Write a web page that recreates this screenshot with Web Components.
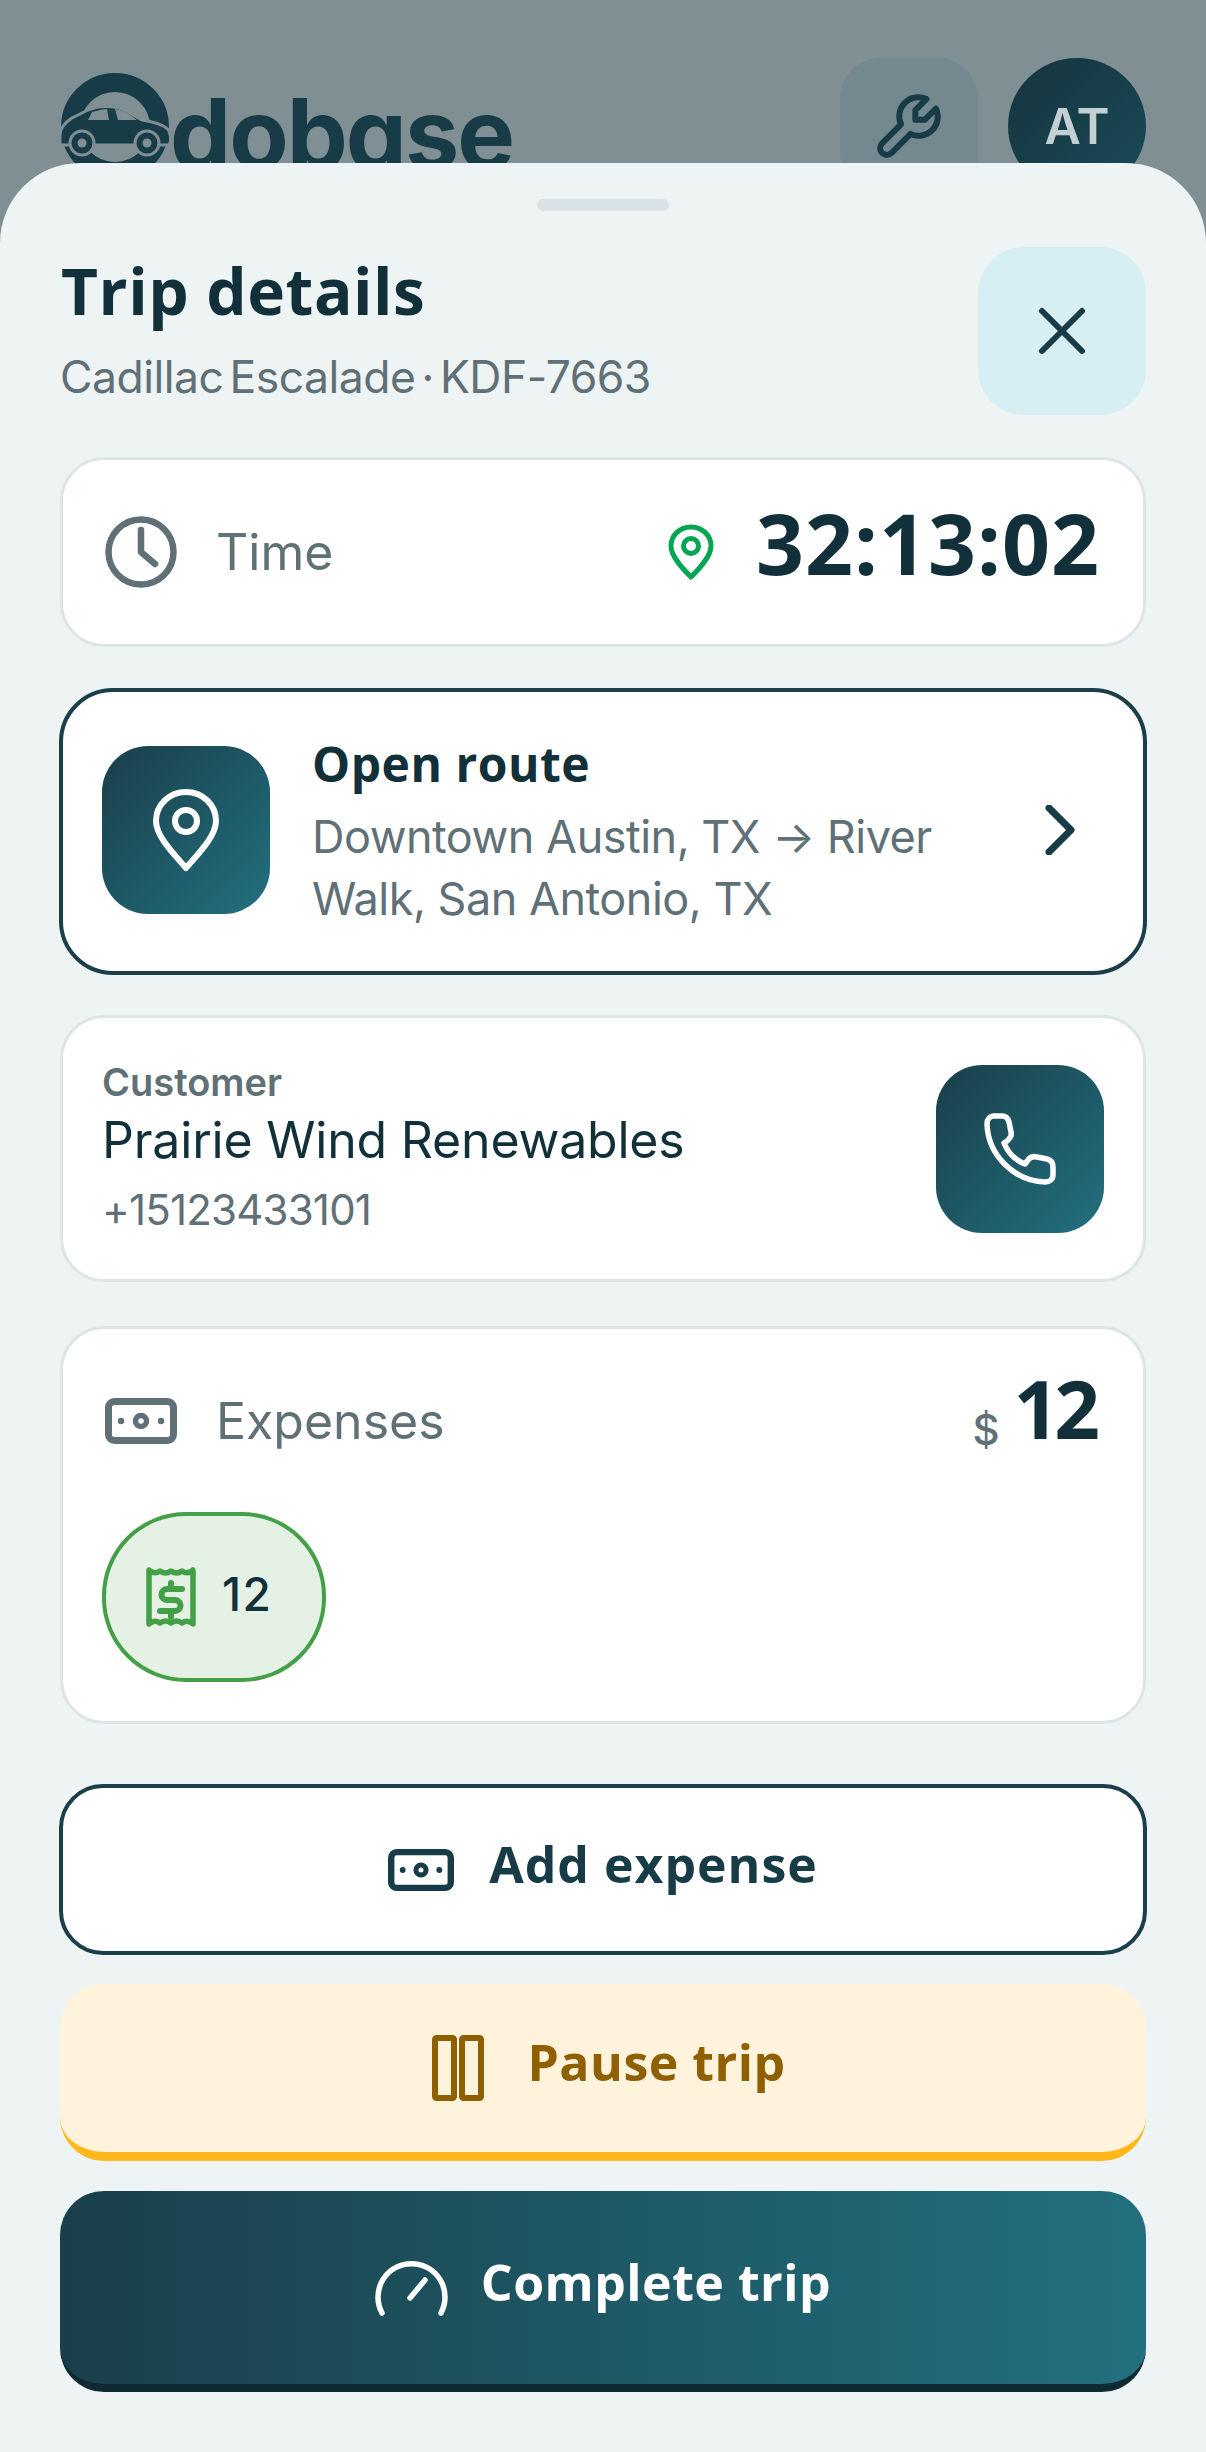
<!DOCTYPE html>
<html>
<head>
<meta charset="utf-8">
<style>
  html, body { margin: 0; padding: 0; }
  body { width: 1206px; height: 2452px; overflow: hidden; background: #808f94; font-family: Inter, "Liberation Sans", sans-serif; }
</style>
</head>
<body>
<trip-page>
  <top-bar slot="top"></top-bar>
  <bottom-sheet>
    <sheet-title></sheet-title>
    <time-card></time-card>
    <route-card></route-card>
    <customer-card></customer-card>
    <expenses-card></expenses-card>
    <action-button kind="outline" icon="money" w="66" h="44" gap="35">Add expense</action-button>
    <action-button kind="pause" icon="pause" w="52" h="66" gap="43">Pause trip</action-button>
    <action-button kind="primary" icon="gauge" w="73" h="56" gap="33">Complete trip</action-button>
  </bottom-sheet>
</trip-page>

<script>
const ICONS = {
  x: ['0 0 48 48', '<path d="M4 4 44 44M44 4 4 44" stroke-width="6"/>'],
  clock: ['0 0 72 72', '<circle cx="36" cy="36" r="32.5" stroke-width="6.5"/><path d="M36 14V36L50 48" stroke-width="6.5"/>'],
  pin: ['0 0 46 56', '<path d="M23 3C12 3 3 11 3 22C3 33 16 46 23 53C30 46 43 33 43 22C43 11 34 3 23 3Z" stroke-width="5"/><circle cx="23" cy="22" r="7.5" stroke-width="5"/>'],
  pinw: ['0 0 68 84', '<path d="M34 4C17 4 4 17 4 33C4 49 24 68 34 80C44 68 64 49 64 33C64 17 51 4 34 4Z" stroke-width="6"/><circle cx="34" cy="33" r="11" stroke-width="6"/>'],
  chevron: ['0 0 30 50', '<path d="M4 3 26 25 4 47" stroke-width="7"/>'],
  phone: ['0 0 72 72', '<path d="M10 3H18C22 3 24 5 25 9L27 19C28 23 26 25 23 28L20 30C24 40 31 47 41 51L44 47C46 44 49 43 53 44L63 46C67 47 69 50 69 54V62C69 66 66 69 61 69C30 68 4 42 3 11C3 6 6 3 10 3Z" stroke-width="5.5"/>'],
  money: ['0 0 72 46', '<rect x="3.500" y="3.500" width="65" height="39" rx="6" stroke-width="7"/><circle cx="36" cy="23" r="5.500" stroke-width="5.500"/><circle cx="16" cy="23" r="3.200" fill="currentColor" stroke="none"/><circle cx="56" cy="23" r="3.200" fill="currentColor" stroke="none"/>'],
  receipt: ['0 0 50 60', '<path d="M3 3Q8.500 8 14 4Q19.500 8 25 4Q30.500 8 36 4Q41.500 8 47 3V57Q41.500 52 36 56Q30.500 52 25 56Q19.500 52 14 56Q8.500 52 3 57Z" stroke-width="5.500"/><path d="M36 22H21A5.500 5.500 0 0 0 21 33H29A5.500 5.500 0 0 1 29 44H14M25 16V22M25 44V50" stroke-width="6"/>'],
  pause: ['0 0 52 66', '<rect x="3" y="3" width="19" height="60" rx="1.500" stroke-width="6"/><rect x="30" y="3" width="19" height="60" rx="1.500" stroke-width="6"/>'],
  gauge: ['0 0 73 56', '<path d="M7 53A33.500 33.500 0 1 1 66 53" stroke-width="5.500"/><path d="M35 38 50 20" stroke-width="5.500"/>'],
  wrench: ['0 0 24 24', '<g transform="translate(24 0) scale(-1 1)"><path d="M7 10h3v-3l-3.500 -3.500a6 6 0 0 1 8 8l6 6a2 2 0 0 1 -3 3l-6 -6a6 6 0 0 1 -8 -8l3.500 3.500" stroke-width="1.900"/></g>']
};

class AppIcon extends HTMLElement {
  connectedCallback() {
    const [box, body] = ICONS[this.getAttribute('name')];
    const w = this.getAttribute('w');
    const h = this.getAttribute('h');
    this.attachShadow({ mode: 'open' }).innerHTML = `
      <style>:host{display:block;flex:none;width:${w}px;height:${h}px} svg{display:block}</style>
      <svg width="${w}" height="${h}" viewBox="${box}" fill="none" stroke="currentColor" stroke-linecap="round" stroke-linejoin="round">${body}</svg>`;
  }
}
customElements.define('app-icon', AppIcon);

function shadowed(tag, html) {
  customElements.define(tag, class extends HTMLElement {
    constructor() {
      super();
      this.attachShadow({ mode: 'open' }).innerHTML = html;
    }
  });
}

const cardCss = `
  :host{display:block;box-sizing:border-box;background:#fff;border:3px solid #dde5e7;border-radius:44px;color:#12303a}
`;
const tileCss = `
  .tile{width:168px;height:168px;flex:none;border-radius:46px;background:linear-gradient(135deg,#1a3f4a,#22707f);color:#fff;display:flex;align-items:center;justify-content:center}
`;

shadowed('trip-page', `
  <style>:host{display:block}</style>
  <slot name="top"></slot>
  <slot></slot>
`);

shadowed('top-bar', `
  <style>
    :host{display:flex;box-sizing:border-box;height:220px;padding:58px 60px 0;justify-content:space-between;color:#173c47}
    .logo{display:flex;align-items:flex-start}
    .logo svg{flex:none;margin-top:12px}
    .word{font:700 97px/1 Inter,sans-serif;font-feature-settings:"cv11";letter-spacing:-2px;margin:27px 0 0 -5px}
    .right{display:flex;gap:30px}
    .tool{width:138px;height:136px;border-radius:40px;background:#74888f;display:flex;align-items:center;justify-content:center;color:#173c47}
    .avatar{width:138px;height:136px;border-radius:50%;background:linear-gradient(135deg,#15343f,#1a4b57);color:#c3cfd2;display:flex;align-items:center;justify-content:center;font:600 50px Inter,sans-serif}
  </style>
  <div class="logo">
    <svg width="115" height="110" viewBox="60 70 115 110">
      <circle cx="115" cy="127" r="44.500" fill="none" stroke="#173c47" stroke-width="19"/>
      <path d="M60 135C60 127 66 122 72 118L88 110C100 105 116 105 128 112L142 120C154 122 166 125 169 131C171 137 171 142 169 145H60C60 142 60 138 60 135Z" fill="#173c47" stroke="#808f94" stroke-width="3"/>
      <path d="M88 120 92 112C99 110 104 109 107 109L109 120ZM115 109C123 110 131 115 137 120L118 120Z" fill="#808f94"/>
      <circle cx="82" cy="143" r="12" fill="#173c47" stroke="#808f94" stroke-width="3"/><circle cx="82" cy="143" r="4.500" fill="#808f94"/>
      <circle cx="147" cy="143" r="12" fill="#173c47" stroke="#808f94" stroke-width="3"/><circle cx="147" cy="143" r="4.500" fill="#808f94"/>
    </svg>
    <span class="word">dobase</span>
  </div>
  <div class="right">
    <div class="tool"><app-icon name="wrench" w="76" h="76"></app-icon></div>
    <div class="avatar">AT</div>
  </div>
`);

shadowed('bottom-sheet', `
  <style>
    :host{display:block;position:relative;box-sizing:border-box;height:2289px;margin-top:-57px;padding:36px 60px 0;background:#eef3f4;border-radius:80px 80px 0 0}
    .handle{width:132px;height:12px;margin:0 auto 36px;border-radius:6px;background:#d9e2e5}
  </style>
  <div class="handle"></div>
  <slot></slot>
`);

shadowed('sheet-title', `
  <style>
    :host{display:flex;justify-content:space-between;align-items:flex-start;margin-bottom:42px}
    h1{margin:0;padding-top:6px;padding-left:1px;font:700 64px/76px "Open Sans",sans-serif;letter-spacing:.5px;color:#12303a}
    p{margin:0;padding-top:20px;font:400 44.500px/56px Inter,sans-serif;letter-spacing:-.5px;word-spacing:-6px;color:#5f7076}
    .close{width:168px;height:168px;border-radius:46px;background:#d6eff3;color:#173c47;display:flex;align-items:center;justify-content:center}
  </style>
  <div><h1>Trip details</h1><p>Cadillac Escalade · KDF-7663</p></div>
  <div class="close"><app-icon name="x" w="48" h="48"></app-icon></div>
`);

shadowed('time-card', `
  <style>
    ${cardCss}
    :host{display:flex;align-items:center;height:190px;padding:0 43px 0 42px;margin-bottom:41px}
    .clock{color:#5f7076}
    .label{margin-left:39px;font:400 50px Inter,sans-serif;color:#5f7076;flex:1}
    .pin{color:#00a651;margin-right:42px}
    .num{font:700 84px/1 "Open Sans",sans-serif;letter-spacing:1px;padding-bottom:18px}
  </style>
  <app-icon class="clock" name="clock" w="72" h="72"></app-icon>
  <span class="label">Time</span>
  <app-icon class="pin" name="pin" w="46" h="56"></app-icon>
  <span class="num">32:13:02</span>
`);

shadowed('route-card', `
  <style>
    ${cardCss}
    ${tileCss}
    :host{display:flex;align-items:center;height:287px;margin:0 -1px 40px;padding:0 68px 0 39px;border:4px solid #1a3f4a;border-radius:54px}
    .tile{margin-top:-3px}
    .text{flex:1;margin-left:42px;padding-right:92px}
    .t{font:700 48px/60px "Open Sans",sans-serif;color:#12303a;letter-spacing:.5px}
    .s{font:400 45px/62px Inter,sans-serif;color:#5f7076;margin-top:12px;letter-spacing:-.5px}
    .chev{color:#173c47;margin-top:-3px}
  </style>
  <div class="tile"><app-icon name="pinw" w="68" h="84"></app-icon></div>
  <div class="text">
    <div class="t">Open route</div>
    <div class="s">Downtown Austin, TX → River Walk, San Antonio, TX</div>
  </div>
  <app-icon class="chev" name="chevron" w="30" h="50"></app-icon>
`);

shadowed('customer-card', `
  <style>
    ${cardCss}
    ${tileCss}
    :host{display:flex;align-items:center;justify-content:space-between;height:267px;padding:0 39px 0 39px;margin-bottom:44px}
    .info{padding-top:6px}
    .c{font:600 38px/46px Inter,sans-serif;color:#5f7076}
    .n{font:400 50px/70px Inter,sans-serif;color:#12303a;letter-spacing:-.2px}
    .p{font:400 42px/70px Inter,sans-serif;color:#5f7076;letter-spacing:-.8px}
  </style>
  <div class="info">
    <div class="c">Customer</div>
    <div class="n">Prairie Wind Renewables</div>
    <div class="p">+15123433101</div>
  </div>
  <div class="tile"><app-icon name="phone" w="72" h="72"></app-icon></div>
`);

shadowed('expenses-card', `
  <style>
    ${cardCss}
    :host{height:398px;padding:47px 43px 0 39px;margin-bottom:60px}
    .row{display:flex;align-items:center;height:90px;padding-left:3px}
    .money{color:#5f7076}
    .label{margin-left:39px;flex:1;font:400 50px Inter,sans-serif;color:#5f7076}
    .cur{font:500 42px Inter,sans-serif;color:#5f7076;margin:16px 14px 0 0}
    .amt{font:700 80px/1 "Open Sans",sans-serif;letter-spacing:-5px;margin-right:5px;padding-bottom:26px}
    .chip{box-sizing:border-box;width:224px;height:170px;margin-top:46px;border:4.500px solid #43a047;border-radius:84px;background:#e4f1e4;display:flex;align-items:center;padding-left:40px;gap:26px;color:#43a047}
    .chip span{font:500 46px/1 Inter,sans-serif;color:#12303a;letter-spacing:1.500px;margin-top:-6px}
  </style>
  <div class="row">
    <app-icon class="money" name="money" w="72" h="46"></app-icon>
    <span class="label">Expenses</span>
    <span class="cur">$</span>
    <span class="amt">12</span>
  </div>
  <div class="chip"><app-icon name="receipt" w="50" h="60"></app-icon><span>12</span></div>
`);

class ActionButton extends HTMLElement {
  connectedCallback() {
    const kind = this.getAttribute('kind');
    const a = n => this.getAttribute(n);
    const skins = {
      outline: 'height:171px;margin:0 -1px 29px;background:#fff;border:4px solid #1a3f4a;color:#173c47;border-radius:44px',
      pause: 'height:177px;margin:0 0 30px;padding-left:12px;background:#fff3dc;border-bottom:9px solid #ffb81c;color:#8f5f00;border-radius:44px',
      primary: 'height:201px;background:linear-gradient(90deg,#1a3f4a,#22707f);border-bottom:8px solid #0f2a33;color:#fff;border-radius:44px'
    };
    const spacing = kind === 'outline' ? 1 : .5;
    this.attachShadow({ mode: 'open' }).innerHTML = `
      <style>
        :host{display:flex;box-sizing:border-box;align-items:center;justify-content:center;gap:${a('gap')}px;${skins[kind]}}
        span{font:700 50px/1 "Open Sans",sans-serif;letter-spacing:${spacing}px;padding-bottom:12px}
      </style>
      <app-icon name="${a('icon')}" w="${a('w')}" h="${a('h')}"></app-icon>
      <span><slot></slot></span>`;
  }
}
customElements.define('action-button', ActionButton);
</script>
</body>
</html>
